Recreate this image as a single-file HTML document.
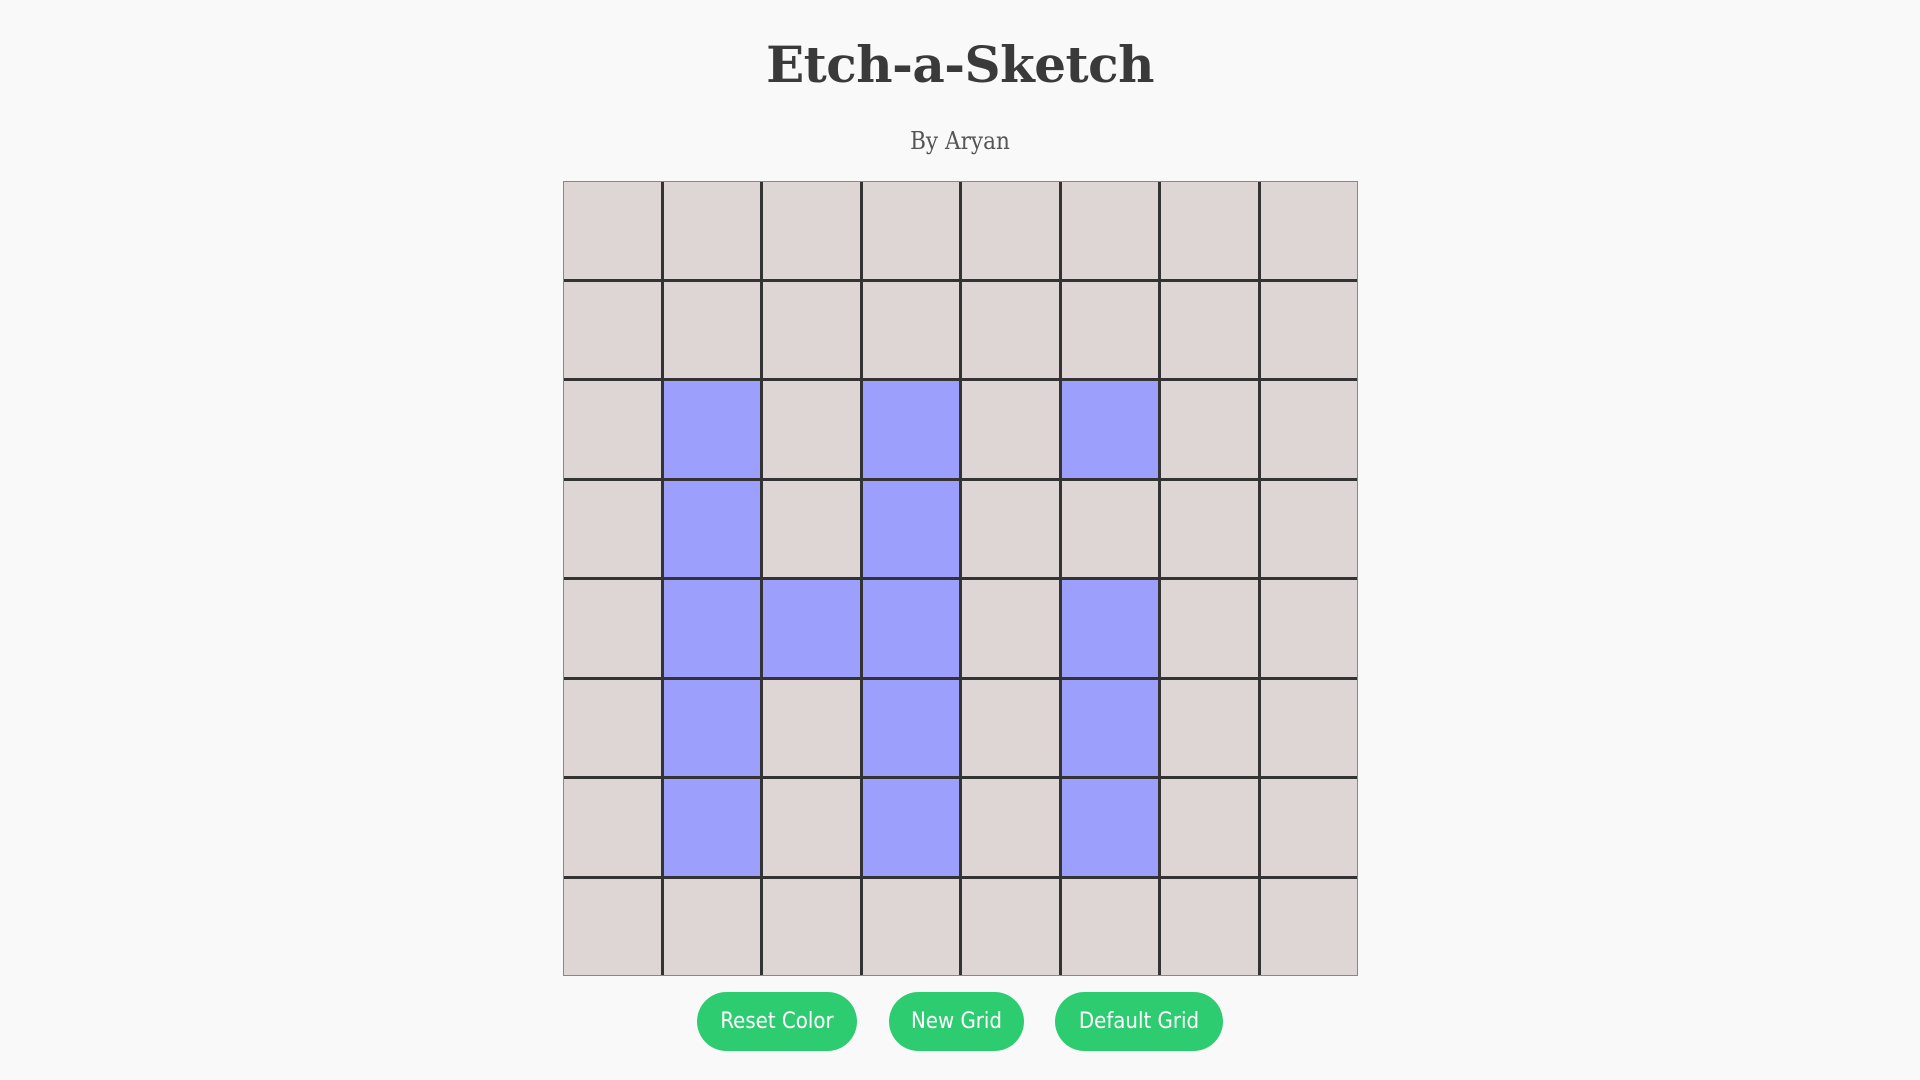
<!DOCTYPE html>
<html><head><style>
body{margin:0;background:#f9f9f9;width:1920px;height:1080px;position:relative;overflow:hidden}
h1{position:absolute;top:35px;left:0;width:1920px;margin:0;text-align:center;font:bold 50px "DejaVu Serif","Liberation Serif",serif;color:#3a3a3a;letter-spacing:-0.5px}
.by{position:absolute;top:127px;left:0;width:1920px;text-align:center;font:24px "DejaVu Serif","Liberation Serif",serif;color:#555;transform:scaleX(0.9)}
.grid{position:absolute;left:563px;top:181px;width:793px;height:793px;border:1px solid #888;background:#333;display:grid;grid-template-columns:repeat(8,1fr);grid-template-rows:repeat(8,1fr);gap:3px}
.grid div{background:#ded5d5}
.grid div.b{background:#9d9ffd}
.btn{position:absolute;top:992px;height:59px;border-radius:30px;background:#2ecc71;color:#fff;font:22px "DejaVu Sans Condensed","DejaVu Sans",sans-serif;display:flex;align-items:center;justify-content:center}
</style></head><body>
<h1>Etch-a-Sketch</h1>
<div class="by">By Aryan</div>
<div class="grid">
<div></div><div></div><div></div><div></div><div></div><div></div><div></div><div></div>
<div></div><div></div><div></div><div></div><div></div><div></div><div></div><div></div>
<div></div><div class="b"></div><div></div><div class="b"></div><div></div><div class="b"></div><div></div><div></div>
<div></div><div class="b"></div><div></div><div class="b"></div><div></div><div></div><div></div><div></div>
<div></div><div class="b"></div><div class="b"></div><div class="b"></div><div></div><div class="b"></div><div></div><div></div>
<div></div><div class="b"></div><div></div><div class="b"></div><div></div><div class="b"></div><div></div><div></div>
<div></div><div class="b"></div><div></div><div class="b"></div><div></div><div class="b"></div><div></div><div></div>
<div></div><div></div><div></div><div></div><div></div><div></div><div></div><div></div>
</div>
<div class="btn" style="left:697px;width:160px">Reset Color</div>
<div class="btn" style="left:889px;width:135px">New Grid</div>
<div class="btn" style="left:1055px;width:168px">Default Grid</div>
</body></html>
